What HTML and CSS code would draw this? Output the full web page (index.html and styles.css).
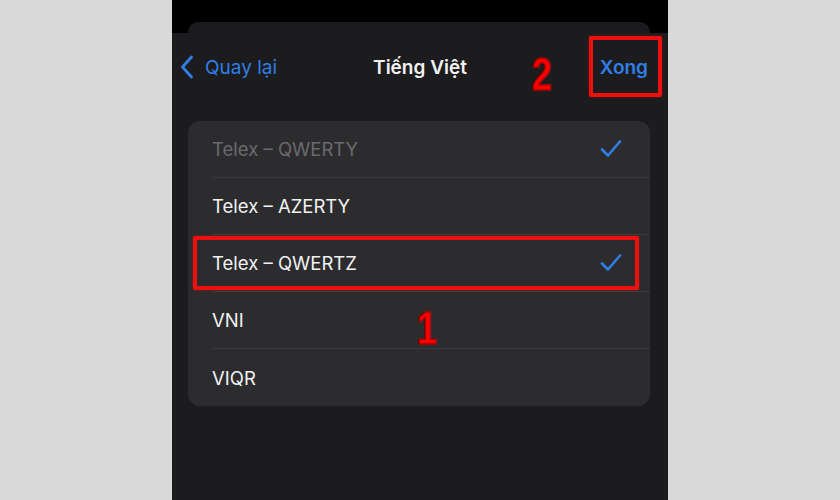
FILE: index.html
```html
<!DOCTYPE html>
<html lang="vi">
<head>
    <meta charset="UTF-8">
    <meta name="viewport" content="width=device-width, initial-scale=1.0">
    <title>Tiếng Việt</title>
    <link rel="stylesheet" href="styles.css">
</head>
<body>

    <div class="phone">
        <div class="behind"></div>

        <div class="sheet">
            <div class="nav">
                <a class="back" href="#">
                    <svg width="14" height="24" viewBox="0 0 14 24">
                        <path d="M11.5 2 L2.5 12 L11.5 22" fill="none" stroke="#2f7fe6" stroke-width="2.8" stroke-linecap="round" stroke-linejoin="round"/>
                    </svg>
                    <span>Quay lại</span>
                </a>
                <div class="title">Tiếng Việt</div>
                <a class="done" href="#">Xong</a>

                <!-- annotation -->
                <span class="step step-two">2</span>
                <span class="mark mark-done"></span>
            </div>

            <div class="list">
                <div class="row dim">
                    <span>Telex – QWERTY</span>
                    <svg class="check" width="22" height="20" viewBox="0 0 22 20">
                        <path d="M2 10.5 L8 16.5 L20 2.5" fill="none" stroke="#2f7fe6" stroke-width="2.6" stroke-linecap="round" stroke-linejoin="round"/>
                    </svg>
                </div>
                <div class="row">
                    <span>Telex – AZERTY</span>
                </div>
                <div class="row">
                    <span>Telex – QWERTZ</span>
                    <svg class="check" width="22" height="20" viewBox="0 0 22 20">
                        <path d="M2 10.5 L8 16.5 L20 2.5" fill="none" stroke="#2f7fe6" stroke-width="2.6" stroke-linecap="round" stroke-linejoin="round"/>
                    </svg>
                    <span class="mark mark-row"></span>
                </div>
                <div class="row">
                    <span>VNI</span>
                </div>
                <div class="row">
                    <span>VIQR</span>
                </div>

                <span class="step step-one">1</span>
            </div>
        </div>
    </div>

</body>
</html>
```

FILE: styles.css
```css
* {
    margin: 0;
    padding: 0;
    box-sizing: border-box;
}

body {
    background-color: #d9d9d9;
    font-family: Inter, "Noto Sans", sans-serif;
    display: flex;
    justify-content: center;
    height: 500px;
    overflow: hidden;
}

.phone {
    width: 496px;
    height: 500px;
    background: #000;
    padding-top: 22px;
    display: flex;
    flex-direction: column;
}

.behind {
    height: 11px;
    margin: 0 18px 0 16px;
    background: #1b1b1d;
    border-radius: 10px 10px 0 0;
}

.sheet {
    flex: 1;
    background: #1c1c1e;
}

/* Navigation bar */
.nav {
    position: relative;
    height: 68px;
    display: flex;
    align-items: center;
    justify-content: space-between;
    padding: 0 20px 0 8px;
}

.nav a {
    text-decoration: none;
    color: #2f7fe6;
    font-size: 19px;
}

.back {
    display: flex;
    align-items: center;
    gap: 11px;
}

.title {
    position: absolute;
    left: 0;
    right: 0;
    text-align: center;
    color: #f2f2f2;
    font-size: 19px;
    font-weight: 600;
    pointer-events: none;
}

.done {
    font-weight: 600;
}

/* List */
.list {
    position: relative;
    margin: 20px 18px 0 16px;
    background: #2c2c2e;
    border-radius: 12px;
}

.row {
    position: relative;
    height: 57px;
    margin-left: 24px;
    padding-right: 28px;
    display: flex;
    align-items: center;
    justify-content: space-between;
    color: #f2f2f2;
    font-size: 18.5px;
    border-bottom: 1px solid #3a3a3c;
}

.row:last-of-type {
    border-bottom: none;
}

.row.dim {
    color: #6a6a6e;
}

/* Red annotations */
.mark {
    position: absolute;
    border: 4px solid #ee0f0f;
    border-radius: 2px;
    box-shadow: 0 0 2px rgba(255, 0, 0, 0.6);
}

.mark-done {
    left: 417px;
    top: 3px;
    width: 73px;
    height: 61px;
}

.mark-row {
    left: -19px;
    right: 11px;
    top: 1px;
    bottom: 1px;
}

.step {
    position: absolute;
    font-family: "Liberation Sans", Arial, sans-serif;
    font-weight: bold;
    font-size: 46px;
    line-height: 1;
    color: #f00;
    -webkit-text-stroke: 1.5px #a00;
    transform: scaleX(0.78);
}

.step-two {
    left: 357px;
    top: 18px;
}

.step-one {
    left: 226px;
    top: 184px;
}
```
